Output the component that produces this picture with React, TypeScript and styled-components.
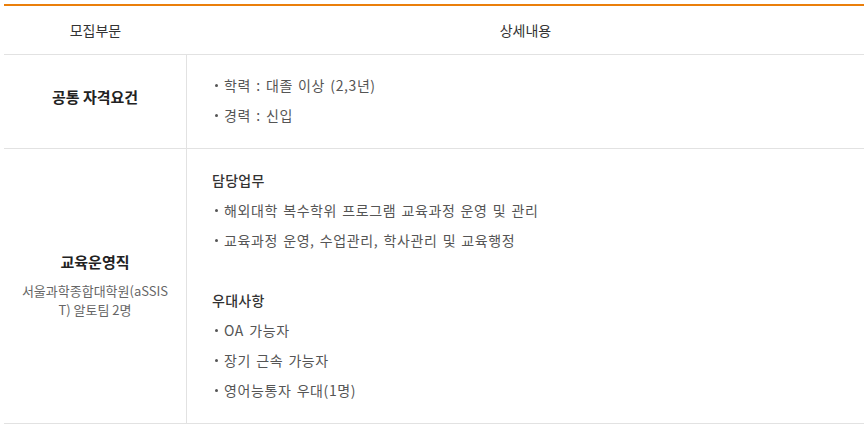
import styled, { createGlobalStyle } from 'styled-components';

const GlobalStyle = createGlobalStyle`
  body {
    margin: 0;
    background: #fff;
    font-family: "Noto Sans CJK KR", "Noto Sans", sans-serif;
  }
`;

// Outer page spacing
const Page = styled.div`
  padding: 4px;
`;

// Recruitment table
const Table = styled.div`
  width: 860px;
  border-top: 2px solid #ea7f0b;
`;

// One row of the table
const Row = styled.div`
  display: grid;
  grid-template-columns: 183px 1fr;
  border-bottom: 1px solid #e2e2e2;
`;

// Header cell
const HeadCell = styled.div`
  height: 48px;
  display: flex;
  align-items: center;
  justify-content: center;
  font-size: 14px;
  color: #333;
`;

// Left column: position name
const LabelCell = styled.div<{ $lift?: number }>`
  display: flex;
  flex-direction: column;
  align-items: center;
  justify-content: center;
  padding: 0 16px ${(p) => p.$lift ?? 4}px;
  border-right: 1px solid #e2e2e2;
  text-align: center;
`;

const LabelTitle = styled.div`
  font-size: 15px;
  font-weight: 700;
  color: #222;
  line-height: 24px;
`;

const LabelSub = styled.div`
  margin-top: 7px;
  font-size: 13px;
  line-height: 19px;
  color: #666;
  word-break: break-all;
`;

// Right column: details
const DetailCell = styled.div<{ $top?: number }>`
  padding: ${(p) => p.$top ?? 15}px 25px 18px 25px;
`;

const Group = styled.div`
  & + & {
    margin-top: 30px;
  }
`;

const GroupTitle = styled.div`
  font-size: 14px;
  font-weight: 500;
  line-height: 30px;
  color: #333;
  letter-spacing: 0.3px;
`;

const Item = styled.div`
  display: flex;
  align-items: center;
  font-size: 14px;
  line-height: 30px;
  color: #555;
  letter-spacing: 0.6px;
  word-spacing: 1.5px;

  &::before {
    content: '';
    width: 3px;
    height: 3px;
    border-radius: 50%;
    background: #555;
    margin: 0 6px 0 3px;
    flex-shrink: 0;
  }
`;

export default function App() {
  return (
    <Page>
      <GlobalStyle />
      <Table>
        <Row>
          <HeadCell>모집부문</HeadCell>
          <HeadCell>상세내용</HeadCell>
        </Row>
        <Row>
          <LabelCell $lift={10}>
            <LabelTitle>공통 자격요건</LabelTitle>
          </LabelCell>
          <DetailCell>
            <Item>학력 : 대졸 이상 (2,3년)</Item>
            <Item>경력 : 신입</Item>
          </DetailCell>
        </Row>
        <Row>
          <LabelCell>
            <LabelTitle>교육운영직</LabelTitle>
            <LabelSub>서울과학종합대학원(aSSIST) 알토팀 2명</LabelSub>
          </LabelCell>
          <DetailCell $top={16}>
            <Group>
              <GroupTitle>담당업무</GroupTitle>
              <Item>해외대학 복수학위 프로그램 교육과정 운영 및 관리</Item>
              <Item>교육과정 운영, 수업관리, 학사관리 및 교육행정</Item>
            </Group>
            <Group>
              <GroupTitle>우대사항</GroupTitle>
              <Item>OA 가능자</Item>
              <Item>장기 근속 가능자</Item>
              <Item>영어능통자 우대(1명)</Item>
            </Group>
          </DetailCell>
        </Row>
      </Table>
    </Page>
  );
}
